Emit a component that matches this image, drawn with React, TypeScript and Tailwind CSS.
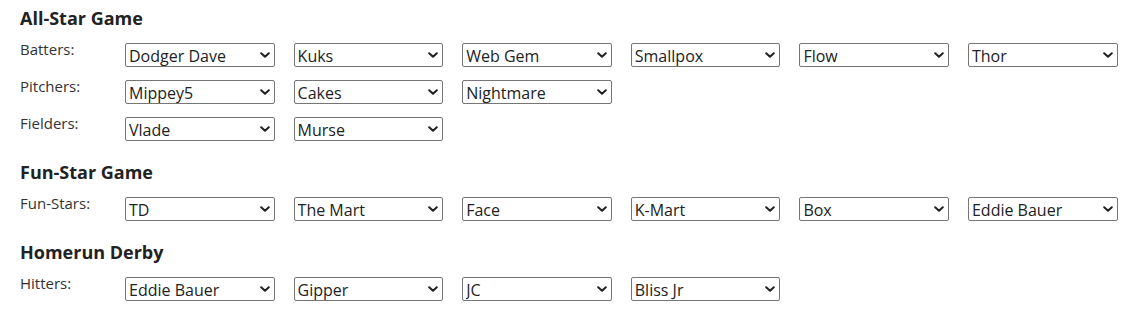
import React from "react";

const font = { fontFamily: '"Open Sans", "Noto Sans", sans-serif' };

function Chevron() {
  return (
    <svg
      className="absolute right-[5px] top-[9px]"
      width="10"
      height="6"
      viewBox="0 0 10 6"
      fill="none"
    >
      <path d="M1.2 1.2L5 4.8L8.8 1.2" stroke="#222" strokeWidth="2" strokeLinecap="round" strokeLinejoin="round" />
    </svg>
  );
}

function Select({ value }: { value: string }) {
  return (
    <div className="relative mt-[4px] h-[24px] w-[149.6px] shrink-0">
      <select
        defaultValue={value}
        className="h-[24px] w-full appearance-none rounded-[2px] border border-[#767676] bg-white pl-[3px] pr-[20px] pt-[2px] pb-0 text-[16px] leading-[20px] text-[#222] outline-none"
        style={font}
      >
        <option>{value}</option>
      </select>
      <Chevron />
    </div>
  );
}

function Row({ label, values }: { label: string; values: string[] }) {
  return (
    <div className="flex items-start">
      <div className="w-[105px] shrink-0 text-[15px] leading-[20px] text-[#333]">{label}</div>
      <div className="flex gap-[19px]">
        {values.map((v, i) => (
          <Select key={i} value={v} />
        ))}
      </div>
    </div>
  );
}

function Section({
  title,
  rows,
}: {
  title: string;
  rows: { label: string; values: string[] }[];
}) {
  return (
    <div>
      <h3 className="text-[18px] font-bold leading-[24px] text-[#222]">{title}</h3>
      <div className="mt-[9px] flex flex-col gap-[9px]">
        {rows.map((r, i) => (
          <Row key={i} label={r.label} values={r.values} />
        ))}
      </div>
    </div>
  );
}

export default function App() {
  return (
    <div className="min-h-[314px] w-[1144px] bg-white px-[20px] pt-[6px]" style={font}>
      <div className="flex flex-col gap-[19px]">
        <Section
          title="All-Star Game"
          rows={[
            {
              label: "Batters:",
              values: ["Dodger Dave", "Kuks", "Web Gem", "Smallpox", "Flow", "Thor"],
            },
            { label: "Pitchers:", values: ["Mippey5", "Cakes", "Nightmare"] },
            { label: "Fielders:", values: ["Vlade", "Murse"] },
          ]}
        />
        <Section
          title="Fun-Star Game"
          rows={[
            {
              label: "Fun-Stars:",
              values: ["TD", "The Mart", "Face", "K-Mart", "Box", "Eddie Bauer"],
            },
          ]}
        />
        <Section
          title="Homerun Derby"
          rows={[
            {
              label: "Hitters:",
              values: ["Eddie Bauer", "Gipper", "JC", "Bliss Jr"],
            },
          ]}
        />
      </div>
    </div>
  );
}
